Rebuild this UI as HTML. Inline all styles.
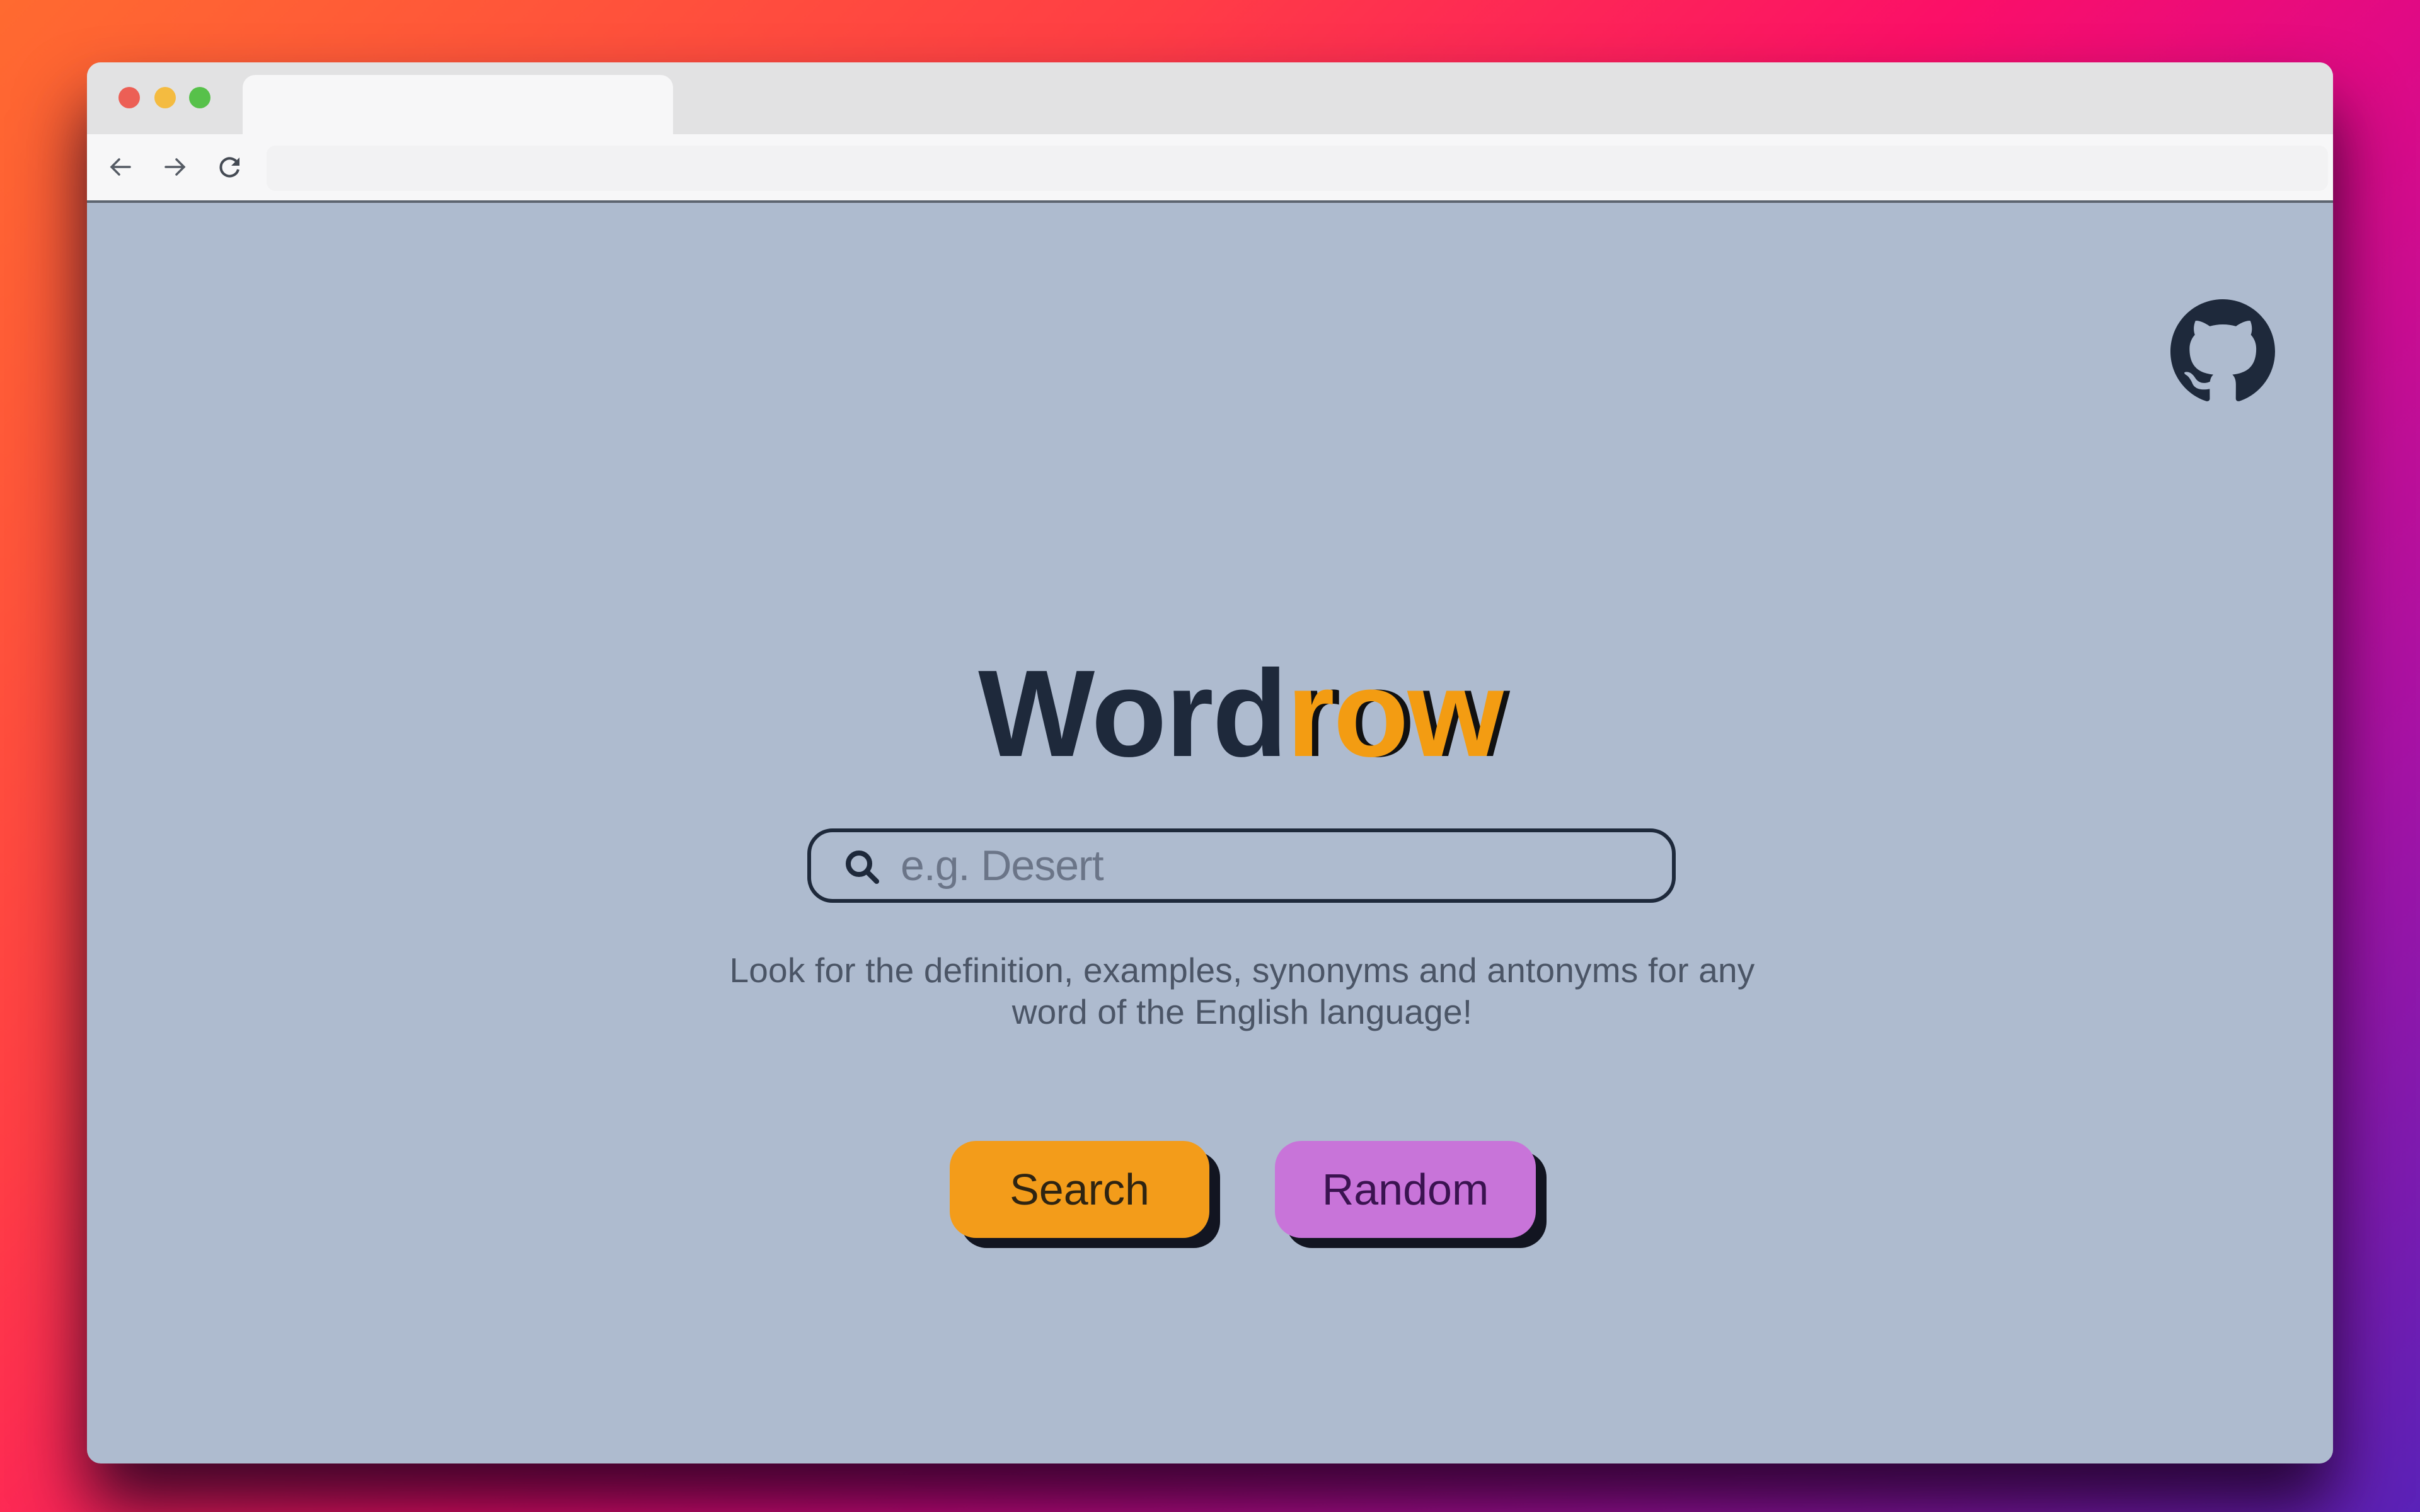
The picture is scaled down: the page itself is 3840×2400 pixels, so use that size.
<!DOCTYPE html>
<html><head><meta charset="utf-8"><style>
html,body{margin:0;padding:0;}
body{width:3840px;height:2400px;overflow:hidden;position:relative;
background:linear-gradient(135deg,#ff6a30 0%,#ff3d45 30%,#fb0f68 50%,#e00a85 62%,#a812a5 80%,#5a22b8 100%);
font-family:"Liberation Sans",Arial,sans-serif;}
.win{position:absolute;left:138px;top:99px;width:3564px;height:2224px;border-radius:22px;overflow:hidden;background:#aebbcf;
box-shadow:0 70px 110px rgba(25,0,30,0.85);}
.tabbar{position:absolute;left:0;top:0;right:0;height:114px;background:#e2e2e3;}
.dot{position:absolute;top:39px;width:34px;height:34px;border-radius:50%;}
.tab{position:absolute;left:247px;top:20px;width:683px;height:100px;background:#f7f7f8;border-radius:20px 20px 0 0;}
.toolbar{position:absolute;left:0;top:114px;right:0;height:105px;background:#f7f7f8;border-bottom:4px solid #5d6570;}
.addr{position:absolute;left:285px;top:18px;right:8px;height:72px;background:#f2f2f3;border-radius:14px;}
.content{position:absolute;left:0;top:223px;right:0;bottom:0;}
.title{position:absolute;left:48px;width:3564px;top:713px;text-align:center;font-weight:bold;font-size:196px;color:#1e293b;letter-spacing:-2px;line-height:1;}
.title span{color:#f39c12;text-shadow:10px 0 0 #111;}
.search{position:absolute;left:1143px;top:993px;width:1366px;height:106px;border:6px solid #1e293b;border-radius:40px;}
.ph{position:absolute;left:142px;top:14px;font-size:68px;color:#6b7588;letter-spacing:-1px;}
.desc{position:absolute;left:51px;width:3564px;top:1185px;text-align:center;font-size:55px;line-height:66px;color:#4b5566;letter-spacing:0.2px;}
.btn{position:absolute;top:1489px;height:154px;border-radius:42px;font-size:70px;line-height:154px;text-align:center;box-shadow:17px 16px 0 #121521;}
</style></head><body>
<div class="win">
  <div class="tabbar">
    <div class="dot" style="left:50px;background:#ec5f55;"></div>
    <div class="dot" style="left:107px;background:#f4bb40;"></div>
    <div class="dot" style="left:162px;background:#57c14a;"></div>
    <div class="tab"></div>
  </div>
  <div class="toolbar">
    <svg style="position:absolute;left:34px;top:32px" width="40" height="40" viewBox="0 0 40 40" fill="none" stroke="#555b64" stroke-width="3.5" stroke-linecap="round"><path d="M34 20H6M17 8L5 20l12 12"/></svg>
    <svg style="position:absolute;left:119px;top:32px" width="40" height="40" viewBox="0 0 40 40" fill="none" stroke="#555b64" stroke-width="3.5" stroke-linecap="round"><path d="M6 20h28M23 8l12 12-12 12"/></svg>
    <svg style="position:absolute;left:207px;top:32px" width="40" height="40" viewBox="0 0 40 40" fill="none" stroke="#444a53" stroke-width="4"><path d="M33 17A14 14 0 1 0 33 24"/><path d="M35 5v13H22z" fill="#444a53" stroke="none"/></svg>
    <div class="addr"></div>
  </div>
  <div class="content">
    <svg style="position:absolute;left:3306px;top:153px" width="166" height="166" viewBox="0 0 16 16"><path fill="#1e293b" d="M8 0C3.580 0 0 3.58 0 8c0 3.54 2.29 6.53 5.47 7.59.4.07.55-.17.55-.38 0-.19-.01-.82-.01-1.49-2.01.37-2.53-.49-2.690-.94-.09-.23-.48-.94-.82-1.13-.28-.15-.68-.52-.01-.53.63-.01 1.08.58 1.23.82.72 1.21 1.87.87 2.33.66.07-.52.28-.87.51-1.07-1.78-.2-3.64-.89-3.64-3.95 0-.87.31-1.59.82-2.15-.08-.2-.36-1.02.08-2.12 0 0 .67-.21 2.2.82.64-.18 1.32-.27 2-.27.68 0 1.36.09 2 .27 1.53-1.04 2.2-.82 2.2-.82.44 1.1.16 1.92.08 2.12.51.56.82 1.27.82 2.15 0 3.07-1.87 3.75-3.65 3.95.29.25.54.73.54 1.48 0 1.07-.01 1.93-.01 2.2 0 .21.15.46.55.38A8.013 8.013 0 0016 8c0-4.42-3.58-8-8-8z"/></svg>
    <div class="title">Word<span>row</span></div>
    <div class="search">
      <svg style="position:absolute;left:50px;top:24px" width="66" height="66" viewBox="0 0 66 66" fill="none" stroke="#1e293b" stroke-width="8" stroke-linecap="round"><circle cx="26" cy="26" r="17"/><path d="M39 39l15 15"/></svg>
      <div class="ph">e.g. Desert</div>
    </div>
    <div class="desc">Look for the definition, examples, synonyms and antonyms for any<br>word of the English language!</div>
    <div class="btn" style="left:1369px;width:412px;background:#f39c1a;color:#2e2412;">Search</div>
    <div class="btn" style="left:1885px;width:414px;background:#c874d9;color:#3a1350;">Random</div>
  </div>
</div>
</body></html>
